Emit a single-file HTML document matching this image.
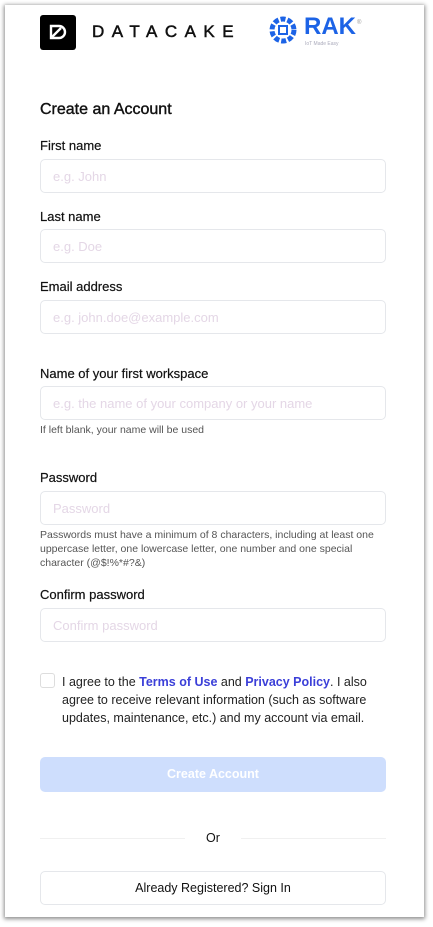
<!DOCTYPE html><html><head><style>
body{margin:0;width:433px;height:927px;background:#fff;font-family:"Liberation Sans",sans-serif;position:relative;overflow:hidden}
.card{position:absolute;left:5px;top:5px;width:419px;height:912px;background:#fff;box-shadow:0 1px 4px 1px rgba(0,0,0,.45)}
.a{position:absolute}
.lbl{position:absolute;left:40px;font-size:13px;color:#111;-webkit-text-stroke:0.2px #111}
.in{position:absolute;left:40px;width:344px;height:32px;border:1px solid #e5e7eb;border-radius:5px;box-sizing:content-box}
.in span{position:absolute;left:12px;top:9px;font-size:13px;color:#e4d7e6}
.hint{position:absolute;left:40px;font-size:10.5px;color:#555;line-height:14px}
</style></head><body>
<div class="card"></div>
<div class="a" style="left:40px;top:15px;width:36px;height:35px;background:#000;border-radius:3px"></div>
<svg class="a" style="left:49px;top:24px" width="18" height="18" viewBox="0 0 18 18"><path d="M2 2h8a6 6 0 0 1 0 12H2z" fill="none" stroke="#fff" stroke-width="2.4"/><path d="M3 13L12 4" stroke="#fff" stroke-width="2.4"/></svg>
<div class="a" style="left:92px;top:22px;font-size:17px;letter-spacing:7.5px;color:#111;-webkit-text-stroke:0.5px #111">DATACAKE</div>
<svg class="a" style="left:268px;top:15px" width="30" height="30" viewBox="0 0 30 30"><circle cx="15" cy="15" r="11" fill="none" stroke="#1c63e6" stroke-width="5" stroke-dasharray="5 2"/><rect x="11" y="11" width="8" height="8" fill="none" stroke="#1c63e6" stroke-width="2"/></svg>
<div class="a" style="left:304px;top:13px;font-size:24px;font-weight:bold;color:#1c63e6">RAK</div>
<div class="a" style="left:357px;top:20px;font-size:6px;color:#999">®</div>
<div class="a" style="left:305px;top:41px;font-size:5px;color:#aab">IoT Made Easy</div>
<div class="a" style="left:40px;top:101px;font-size:16px;color:#111;-webkit-text-stroke:0.4px #111">Create an Account</div>
<div class="lbl" style="top:138px">First name</div><div class="in" style="top:159px"><span>e.g. John</span></div>
<div class="lbl" style="top:209px">Last name</div><div class="in" style="top:229px"><span>e.g. Doe</span></div>
<div class="lbl" style="top:279px">Email address</div><div class="in" style="top:300px"><span>e.g. john.doe@example.com</span></div>
<div class="lbl" style="top:366px">Name of your first workspace</div><div class="in" style="top:386px"><span>e.g. the name of your company or your name</span></div>
<div class="hint" style="top:423px">If left blank, your name will be used</div>
<div class="lbl" style="top:470px">Password</div><div class="in" style="top:491px"><span>Password</span></div>
<div class="hint" style="top:528px;width:350px">Passwords must have a minimum of 8 characters, including at least one uppercase letter, one lowercase letter, one number and one special character (@$!%*#?&amp;)</div>
<div class="lbl" style="top:587px">Confirm password</div><div class="in" style="top:608px"><span>Confirm password</span></div>
<div class="a" style="left:40px;top:673px;width:13px;height:13px;border:1px solid #ddd;border-radius:3px"></div>
<div class="a" style="left:62px;top:673px;width:330px;font-size:12.5px;line-height:18px;color:#222">I agree to the <b style="color:#3b3fd8">Terms of Use</b> and <b style="color:#3b3fd8">Privacy Policy</b>. I also agree to receive relevant information (such as software updates, maintenance, etc.) and my account via email.</div>
<div class="a" style="left:40px;top:757px;width:346px;height:35px;background:#cedefd;border-radius:5px;color:#fff;font-weight:bold;font-size:12.5px;text-align:center;line-height:35px">Create Account</div>
<div class="a" style="left:40px;top:838px;width:145px;border-top:1px solid #f0f0f0"></div>
<div class="a" style="left:241px;top:838px;width:145px;border-top:1px solid #f0f0f0"></div>
<div class="a" style="left:40px;top:831px;width:346px;text-align:center;font-size:12.5px;color:#111">Or</div>
<div class="a" style="left:40px;top:871px;width:344px;height:32px;border:1px solid #e5e7eb;border-radius:5px;text-align:center;line-height:32px;font-size:12.5px;color:#111">Already Registered? Sign In</div>
</body></html>
